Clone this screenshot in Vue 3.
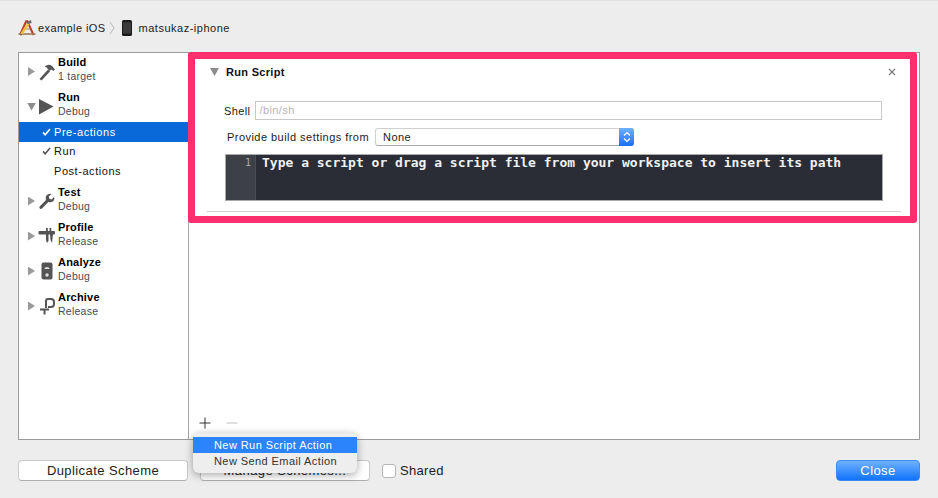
<script setup>
const actions = [
  { name: 'Build', sub: '1 target', icon: 'build' },
  { name: 'Run', sub: 'Debug', icon: 'run', open: true, children: [
    { name: 'Pre-actions', check: true, selected: true },
    { name: 'Run', check: true },
    { name: 'Post-actions' }
  ] },
  { name: 'Test', sub: 'Debug', icon: 'test' },
  { name: 'Profile', sub: 'Release', icon: 'profile' },
  { name: 'Analyze', sub: 'Debug', icon: 'analyze' },
  { name: 'Archive', sub: 'Release', icon: 'archive' }
]
</script>

<template>
  <div class="page">
    <header class="crumbs">
      <svg class="xcode" width="18" height="18" viewBox="0 0 18 18">
        <path d="M8.5 1.5 L2 16 M9 1.5 L15.5 16" fill="none" stroke="#b8402e" stroke-width="2"/>
        <path d="M0.5 15 H17.5" stroke="#9a7a58" stroke-width="1.6"/>
        <path d="M5.5 10 H12" stroke="#a8876a" stroke-width="1"/>
        <path d="M3.5 15 L10.5 4.5" stroke="#eac53c" stroke-width="2.4"/>
        <path d="M3.5 15 L2.8 16.6 L4.6 15.8 Z" fill="#444"/>
        <path d="M7.5 3.4 L13 1 L13.6 4 L10 5 Z" fill="#6b6b6b"/>
      </svg>
      <span class="crumb">example iOS</span>
      <svg class="chev" width="6" height="14" viewBox="0 0 6 14"><path d="M1 1 L5 7 L1 13" fill="none" stroke="#b9b9b9"/></svg>
      <svg class="phone" width="10" height="16" viewBox="0 0 10 16">
        <rect width="10" height="16" rx="1.6" fill="#1a1a1a"/>
        <rect x="1" y="2.2" width="8" height="11.4" fill="#3a3a3a"/>
      </svg>
      <span class="crumb device">matsukaz-iphone</span>
    </header>

    <main class="panel">
      <aside class="sidebar">
        <template v-for="a in actions" :key="a.name">
          <div class="action">
            <span class="tri" :class="{ down: a.open }"></span>
            <svg class="aicon" width="18" height="18" viewBox="0 0 18 18">
              <g v-if="a.icon === 'build'" fill="#555">
                <path d="M1.5 16 L10 6.5 L12 8.5 L3.5 17.5 Z"/>
                <path d="M6.5 3.5 Q11 0.5 14 3 L17 6.5 L15.5 8 L13.5 6.5 L11.5 8 L9.5 5.5 Q9 4 6.5 3.5 Z"/>
              </g>
              <path v-else-if="a.icon === 'run'" d="M1 1 L15.5 8.5 L1 16.5 Z" fill="#555"/>
              <path v-else-if="a.icon === 'test'" fill="#555" d="M1.6 14.5 L8 8 Q6.8 4 10 2.2 Q11.6 1.4 13.6 2 L10.8 4.6 L11.4 6.8 L13.6 7.4 L16.2 4.8 Q16.8 7 15.6 8.8 Q13.4 11 10.4 10 L4 16.6 Q2.8 17.4 1.8 16.4 Q1 15.4 1.6 14.5 Z"/>
              <g v-else-if="a.icon === 'profile'" fill="#555">
                <rect x="0.5" y="4" width="16.5" height="3.5" rx="1"/>
                <rect x="8" y="1" width="1.8" height="5"/>
                <rect x="11.5" y="1" width="1.8" height="5"/>
                <path d="M8 7 H10.5 V14 L9 16 L8 13 Z"/>
                <path d="M12 7 H15 L14 16 L12.5 13 Z"/>
              </g>
              <g v-else-if="a.icon === 'analyze'">
                <rect x="3.5" y="0.5" width="11" height="17" rx="2" fill="#555"/>
                <path d="M6.2 7 A3 3 0 0 1 11.8 7 Z" fill="#ddd"/>
                <circle cx="9" cy="13" r="1.7" fill="#ddd"/>
              </g>
              <g v-else fill="none" stroke="#555" stroke-width="2">
                <path d="M8 11 V4 Q8 2 10 2 H13 Q16 2 16 5 V7 Q16 10 13 10 H10"/>
                <path d="M2 12.5 H11"/>
                <path d="M6.5 12.5 V17.5"/>
              </g>
            </svg>
            <div class="labels">
              <b>{{ a.name }}</b>
              <span>{{ a.sub }}</span>
            </div>
          </div>
          <div v-if="a.children" class="children">
            <div v-for="c in a.children" :key="c.name" class="child" :class="{ selected: c.selected }">
              <span class="check">
                <svg v-if="c.check" width="9" height="8" viewBox="0 0 9 8"><path d="M1 4.4 L3.2 6.8 L8 1" fill="none" stroke="currentColor" stroke-width="1.6"/></svg>
              </span>{{ c.name }}
            </div>
          </div>
        </template>
      </aside>

      <section class="detail">
        <div class="card">
          <div class="card-head">
            <span class="tri down small"></span>
            <b>Run Script</b>
            <svg class="x" width="8" height="8" viewBox="0 0 8 8"><path d="M1 1 L7 7 M7 1 L1 7" stroke="#777" stroke-width="1.1"/></svg>
          </div>
          <div class="shell-row">
            <label>Shell</label>
            <div class="input">/bin/sh</div>
          </div>
          <div class="build-row">
            <label>Provide build settings from</label>
            <div class="select">
              <span>None</span>
              <span class="stepper">
                <svg width="8" height="12" viewBox="0 0 8 12"><path d="M1 4.5 L4 1.5 L7 4.5 M1 7.5 L4 10.5 L7 7.5" fill="none" stroke="#fff" stroke-width="1.2"/></svg>
              </span>
            </div>
          </div>
          <div class="editor">
            <div class="gutter">1</div>
            <div class="code">Type a script or drag a script file from your workspace to insert its path</div>
          </div>
          <div class="rule"></div>
        </div>
        <div class="tools">
          <svg width="12" height="12" viewBox="0 0 12 12"><path d="M6 0.5 V11.5 M0.5 6 H11.5" stroke="#333" stroke-width="1"/></svg>
          <svg width="12" height="12" viewBox="0 0 12 12"><path d="M0.5 6 H11.5" stroke="#bbb" stroke-width="1"/></svg>
        </div>
        <div class="highlight"></div>
      </section>
    </main>

    <footer class="bottom">
      <button class="btn dup">Duplicate Scheme</button>
      <button class="btn manage">Manage Schemes...</button>
      <label class="shared"><span class="box"></span>Shared</label>
      <button class="btn close">Close</button>
    </footer>

    <div class="popup">
      <div class="item on">New Run Script Action</div>
      <div class="item">New Send Email Action</div>
    </div>
  </div>
</template>

<style>
html, body { margin: 0; background: #ededed; }
</style>

<style scoped>
.page {
  position: relative;
  box-sizing: border-box;
  width: 938px;
  height: 498px;
  padding: 0 18px;
  background: #ededed;
  border-top: 1px solid #e2e2e2;
  font-family: "Liberation Sans", Arial, sans-serif;
  color: #1c1c1c;
  overflow: hidden;
}
.crumbs {
  display: flex;
  align-items: center;
  height: 51px;
  padding-top: 3px;
  box-sizing: border-box;
  font-size: 11px;
  letter-spacing: 0.42px;
  color: #222;
}
.xcode { margin-right: 2px; }
.crumb { white-space: nowrap; }
.device { letter-spacing: 0.5px; }
.chev { margin: 0 7px 0 3px; }
.phone { margin-right: 7px; }

.panel {
  display: flex;
  box-sizing: border-box;
  width: 902px;
  height: 388px;
  background: #fff;
  border: 1px solid #9b9b9b;
}
.sidebar {
  box-sizing: border-box;
  width: 170px;
  flex: none;
  padding-top: 1px;
  border-right: 1px solid #a5a5a5;
  font-size: 11px;
}
.action {
  display: flex;
  align-items: center;
  height: 35px;
  box-sizing: border-box;
  padding-left: 9px;
}
.tri {
  flex: none;
  width: 7px;
  height: 9px;
  background: #9a9a9a;
  clip-path: polygon(0 0, 100% 50%, 0 100%);
  margin-right: 3px;
}
.tri.down {
  width: 9px;
  height: 8px;
  background: #8c8c8c;
  clip-path: polygon(0 0, 100% 0, 50% 100%);
  margin-left: -1px;
  margin-right: 2px;
}
.aicon { flex: none; margin-right: 2px; }
.labels {
  display: flex;
  flex-direction: column;
  line-height: 14px;
  margin-top: -5px;
}
.labels b { color: #000; letter-spacing: 0.2px; }
.labels span { color: #4a4a55; font-size: 10.5px; letter-spacing: 0.25px; }
.children { margin: -2px 0 3px; }
.child {
  display: flex;
  align-items: center;
  height: 19.5px;
  padding-left: 23px;
  color: #111;
  letter-spacing: 0.55px;
}
.child.selected { background: #0a69d8; color: #fff; }
.check {
  display: flex;
  align-items: center;
  flex: none;
  width: 12px;
  color: #555;
}
.child.selected .check { color: #fff; }

.detail {
  position: relative;
  flex: 1;
  display: flex;
  flex-direction: column;
  min-width: 0;
}
.card {
  box-sizing: border-box;
  height: 171px;
  padding: 0 18px;
}
.card-head {
  display: flex;
  align-items: center;
  height: 38px;
  font-size: 11px;
  padding-left: 3px;
  color: #111;
}
.card-head b { margin-left: 7px; letter-spacing: 0.3px; }
.x { margin-left: auto; margin-right: 5px; }
.tri.small { margin: 0; }
.shell-row {
  display: flex;
  align-items: center;
  margin-top: 10px;
  margin-right: 19px;
  font-size: 11px;
  letter-spacing: 0.4px;
}
.shell-row label { margin-left: 17px; margin-right: 5px; }
.input {
  flex: 1;
  box-sizing: border-box;
  height: 19px;
  line-height: 17px;
  padding-left: 3px;
  border: 1px solid #c8c8c8;
  color: #b5b5b5;
}
.build-row {
  display: flex;
  align-items: center;
  margin-top: 8px;
  font-size: 11px;
  letter-spacing: 0.46px;
}
.build-row label { margin-left: 20px; margin-right: 6px; white-space: nowrap; }
.select {
  display: flex;
  justify-content: space-between;
  align-items: center;
  box-sizing: border-box;
  width: 259px;
  height: 18px;
  padding-left: 7px;
  background: #fff;
  border: 1px solid #cfcfcf;
  border-bottom-color: #aaa;
  border-radius: 3px;
}
.stepper {
  display: flex;
  align-items: center;
  justify-content: center;
  width: 15px;
  height: 18px;
  margin-right: -1px;
  background: linear-gradient(#6cb0ff, #1a6ff5);
  border-radius: 0 3px 3px 0;
}
.editor {
  display: flex;
  box-sizing: border-box;
  height: 47px;
  margin: 8px 18px 0;
  background: #2a2c36;
  border: 1px solid #aaa;
  font-family: "DejaVu Sans Mono", monospace;
  font-size: 13px;
  font-weight: bold;
  line-height: 15px;
  color: #f1f1f1;
  white-space: nowrap;
}
.gutter {
  flex: none;
  box-sizing: border-box;
  width: 30px;
  padding: 0 4px 0 0;
  background: #3e4048;
  border-right: 1px solid #4b4d55;
  color: #aaa;
  font-size: 10px;
  font-weight: normal;
  text-align: right;
}
.code { padding-left: 6px; }
.rule {
  height: 1px;
  margin-top: 10px;
  background: #d0d0d0;
}
.tools {
  display: flex;
  gap: 15px;
  margin-top: auto;
  padding: 0 0 10px 10px;
}
.highlight {
  position: absolute;
  left: -1px;
  top: -1px;
  box-sizing: border-box;
  width: 729px;
  height: 171px;
  border: 7px solid #fd2f6f;
  border-radius: 3px;
  pointer-events: none;
}

.bottom {
  display: flex;
  align-items: center;
  margin-top: 20px;
  height: 21px;
}
.btn {
  box-sizing: border-box;
  height: 21px;
  padding: 0;
  background: #fff;
  border: 1px solid #c9c9c9;
  border-bottom-color: #aeaeae;
  border-radius: 4px;
  font-family: "Liberation Sans", Arial, sans-serif;
  font-size: 13px;
  letter-spacing: 0.42px;
  color: #222;
}
.dup { width: 170px; margin-right: 12px; }
.manage { width: 170px; margin-right: 12px; }
.shared {
  display: flex;
  align-items: center;
  font-size: 13px;
  letter-spacing: 0.3px;
}
.box {
  box-sizing: border-box;
  width: 14px;
  height: 14px;
  margin-right: 4px;
  background: #fff;
  border: 1px solid #b5b5b5;
  border-radius: 3px;
}
.close {
  width: 84px;
  margin-left: auto;
  color: #fff;
  border: 1px solid #3c8bf5;
  background: linear-gradient(#6fb2ff, #1173fc);
}
.popup {
  position: absolute;
  left: 193px;
  top: 432px;
  box-sizing: border-box;
  width: 164px;
  height: 40px;
  padding: 4px 0;
  background: #eeeeee;
  border-radius: 6px;
  box-shadow: 0 2px 8px rgba(0, 0, 0, 0.35);
  font-size: 11px;
  letter-spacing: 0.42px;
}
.item {
  height: 16px;
  line-height: 16px;
  padding-left: 21px;
  color: #333;
  white-space: nowrap;
}
.item.on { background: #2b84fb; color: #fff; }
</style>
